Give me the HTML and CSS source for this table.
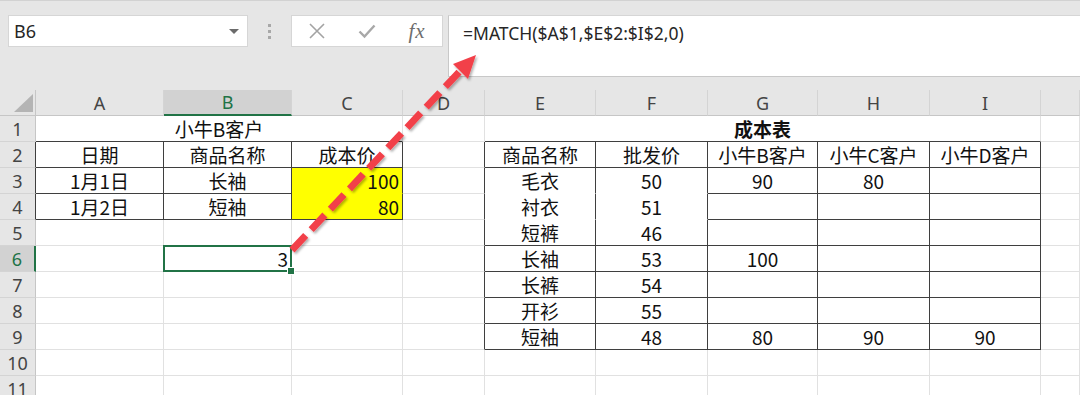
FILE: index.html
```html
<!DOCTYPE html>
<html lang="zh-CN">
<head>
<meta charset="utf-8">
<title>Excel MATCH</title>
<link rel="stylesheet" href="styles.css">
</head>
<body>
<div class="app">
  <div class="toolbar">
    <div class="namebox"><span>B6</span><span class="caret"></span></div>
    <div class="sep"><i></i><i></i><i></i></div>
    <div class="fxbox">
      <span class="ico"><svg width="18" height="18" viewBox="0 0 18 18"><path d="M2 2 L16 16 M16 2 L2 16" stroke="#a3a3a3" stroke-width="1.6" fill="none"/></svg></span>
      <span class="ico"><svg width="18" height="18" viewBox="0 0 18 18"><path d="M1.5 9.5 L6.5 14.5 L16.5 3.5" stroke="#a8a8a8" stroke-width="2.4" fill="none"/></svg></span>
      <span class="ico fx">fx</span>
    </div>
    <div class="formula">=MATCH($A$1,$E$2:$I$2,0)</div>
  </div>

  <div class="sheet">
    <!-- header row -->
    <div class="corner"><span class="tri"></span></div>
    <div class="ch">A</div><div class="ch sel">B</div><div class="ch">C</div><div class="ch">D</div>
    <div class="ch">E</div><div class="ch">F</div><div class="ch">G</div><div class="ch">H</div><div class="ch">I</div><div class="ch"></div>

    <!-- row 1 -->
    <div class="rh">1</div>
    <div class="c span3 bb">小牛B客户</div>
    <div class="c"></div>
    <div class="c span5 bb bold">成本表</div>
    <div class="c"></div>

    <!-- row 2 -->
    <div class="rh dk">2</div>
    <div class="c br bb">日期</div><div class="c br bb">商品名称</div><div class="c br bb">成本价</div>
    <div class="c br"></div>
    <div class="c br bb">商品名称</div><div class="c br bb">批发价</div><div class="c br bb">小牛B客户</div><div class="c br bb">小牛C客户</div><div class="c br bb">小牛D客户</div>
    <div class="c"></div>

    <!-- row 3 -->
    <div class="rh dk">3</div>
    <div class="c br bb">1月1日</div><div class="c br bb">长袖</div><div class="c br yl num">100</div>
    <div class="c br"></div>
    <div class="c br nb">毛衣</div><div class="c br nb">50</div><div class="c br bb">90</div><div class="c br bb">80</div><div class="c br bb"></div>
    <div class="c"></div>

    <!-- row 4 -->
    <div class="rh dk">4</div>
    <div class="c br bb">1月2日</div><div class="c br bb">短袖</div><div class="c br bb yl num">80</div>
    <div class="c br"></div>
    <div class="c br nb">衬衣</div><div class="c br nb">51</div><div class="c br bb"></div><div class="c br bb"></div><div class="c br bb"></div>
    <div class="c"></div>

    <!-- row 5 -->
    <div class="rh">5</div>
    <div class="c"></div><div class="c"></div><div class="c"></div>
    <div class="c br"></div>
    <div class="c br bb">短裤</div><div class="c br bb">46</div><div class="c br bb"></div><div class="c br bb"></div><div class="c br bb"></div>
    <div class="c"></div>

    <!-- row 6 -->
    <div class="rh rsel">6</div>
    <div class="c"></div><div class="c num active">3<span class="handle"></span></div><div class="c"></div>
    <div class="c br"></div>
    <div class="c br bb">长袖</div><div class="c br bb">53</div><div class="c br bb">100</div><div class="c br bb"></div><div class="c br bb"></div>
    <div class="c"></div>

    <!-- row 7 -->
    <div class="rh">7</div>
    <div class="c"></div><div class="c"></div><div class="c"></div>
    <div class="c br"></div>
    <div class="c br bb">长裤</div><div class="c br bb">54</div><div class="c br bb"></div><div class="c br bb"></div><div class="c br bb"></div>
    <div class="c"></div>

    <!-- row 8 -->
    <div class="rh">8</div>
    <div class="c"></div><div class="c"></div><div class="c"></div>
    <div class="c br"></div>
    <div class="c br bb">开衫</div><div class="c br bb">55</div><div class="c br bb"></div><div class="c br bb"></div><div class="c br bb"></div>
    <div class="c"></div>

    <!-- row 9 -->
    <div class="rh">9</div>
    <div class="c"></div><div class="c"></div><div class="c"></div>
    <div class="c br"></div>
    <div class="c br bb">短袖</div><div class="c br bb">48</div><div class="c br bb">80</div><div class="c br bb">90</div><div class="c br bb">90</div>
    <div class="c"></div>

    <!-- row 10 -->
    <div class="rh">10</div>
    <div class="c"></div><div class="c"></div><div class="c"></div><div class="c"></div><div class="c"></div>
    <div class="c"></div><div class="c"></div><div class="c"></div><div class="c"></div><div class="c"></div>

    <!-- row 11 -->
    <div class="rh">11</div>
    <div class="c"></div><div class="c"></div><div class="c"></div><div class="c"></div><div class="c"></div>
    <div class="c"></div><div class="c"></div><div class="c"></div><div class="c"></div><div class="c"></div>
  </div>

  <svg class="arrow" width="1080" height="395" viewBox="0 0 1080 395">
    <defs>
      <filter id="sh" x="-20%" y="-20%" width="140%" height="140%">
        <feDropShadow dx="1.5" dy="2" stdDeviation="1.2" flood-color="#000" flood-opacity="0.3"/>
      </filter>
    </defs>
    <g filter="url(#sh)">
      <line x1="292" y1="250" x2="462" y2="69" stroke="#f2404a" stroke-width="7" stroke-dasharray="20 8"/>
      <polygon points="476,55 453,64 468,79" fill="#f2404a"/>
    </g>
  </svg>
</div>
</body>
</html>
```

FILE: styles.css
```css
html, body {
  margin: 0;
  padding: 0;
  background: #ffffff;
}

.app {
  position: relative;
  width: 1080px;
  height: 395px;
  overflow: hidden;
  font-family: "Noto Sans CJK SC", "Noto Sans", sans-serif;
}

/* ---------- toolbar ---------- */
.toolbar {
  height: 90px;
  box-sizing: border-box;
  background: #e6e6e6;
  border-top: 1px solid #d2d2d2;
  display: flex;
  align-items: flex-start;
  padding: 14px 0 0 8px;
}

.namebox {
  width: 240px;
  height: 32px;
  box-sizing: border-box;
  background: #fff;
  border: 1px solid #d6d6d6;
  display: flex;
  align-items: center;
  justify-content: space-between;
  padding: 0 8px 0 5px;
  font-family: "Noto Sans", sans-serif;
  font-size: 18px;
  color: #262626;
}

.caret {
  width: 0;
  height: 0;
  border-left: 5px solid transparent;
  border-right: 5px solid transparent;
  border-top: 5px solid #6b6b6b;
}

.sep {
  width: 43px;
  height: 32px;
  display: flex;
  flex-direction: column;
  align-items: center;
  justify-content: center;
  gap: 3px;
}

.sep i {
  display: block;
  width: 3px;
  height: 3px;
  background: #a8a8a8;
}

.fxbox {
  width: 152px;
  height: 32px;
  box-sizing: border-box;
  background: #fff;
  border: 1px solid #d6d6d6;
  display: flex;
  align-items: center;
  justify-content: space-around;
}

.ico {
  width: 20px;
  display: flex;
  align-items: center;
  justify-content: center;
}

.fx {
  font-family: "Liberation Serif", serif;
  font-style: italic;
  font-size: 21px;
  color: #6e6e6e;
  line-height: 1;
  letter-spacing: 1px;
}

.formula {
  flex: 1;
  margin-left: 5px;
  height: 62px;
  box-sizing: border-box;
  background: #fff;
  border-top: 1px solid #d6d6d6;
  border-left: 1px solid #c8c8c8;
  border-bottom: 1px solid #c8c8c8;
  padding: 5px 0 0 14px;
  font-family: "Noto Sans", sans-serif;
  font-size: 17.5px;
  line-height: 24px;
  color: #262626;
}

/* ---------- sheet ---------- */
.sheet {
  display: grid;
  grid-template-columns: 36px 128px 128px 111px 82px 111px 112px 110px 112px 111px 1fr;
  grid-auto-rows: 26px;
}

.corner, .ch, .rh {
  background: #e6e6e6;
  box-sizing: border-box;
  color: #444;
  font-family: "Noto Sans", sans-serif;
  font-size: 18px;
  display: flex;
  align-items: center;
  justify-content: center;
}

.corner {
  position: relative;
  border-right: 1px solid #c6c6c6;
  border-bottom: 1px solid #c6c6c6;
}

.tri {
  position: absolute;
  right: 2px;
  bottom: 3px;
  width: 0;
  height: 0;
  border-left: 19px solid transparent;
  border-bottom: 18px solid #b4b4b4;
}

.ch {
  border-right: 1px solid #d4d4d4;
  border-bottom: 1px solid #c6c6c6;
}

.ch.sel {
  background: #d2d2d2;
  color: #217346;
  border-bottom: 2px solid #217346;
}

.rh {
  border-right: 1px solid #c6c6c6;
  border-bottom: 1px solid #d4d4d4;
}

.rh.dk {
  border-right-color: #3f3f3f;
}

.rh.rsel {
  background: #d2d2d2;
  color: #217346;
  border-right: 2px solid #217346;
}

.c {
  box-sizing: border-box;
  border-right: 1px solid #e1e1e1;
  border-bottom: 1px solid #e1e1e1;
  font-size: 19px;
  line-height: 25px;
  color: #111;
  text-align: center;
  white-space: nowrap;
  overflow: visible;
}

.span3 { grid-column: span 3; }
.span5 { grid-column: span 5; }
.bold { font-weight: 700; }

.br { border-right-color: #3f3f3f; }
.bb { border-bottom-color: #3f3f3f; }
.nb { border-bottom-color: #ffffff; }

.yl {
  background: #ffff00;
  border-bottom-color: #ffff00;
}
.yl.bb { border-bottom-color: #3f3f3f; }

.num {
  text-align: right;
  padding-right: 3px;
}

.active {
  position: relative;
}

.active::after {
  content: "";
  position: absolute;
  left: -1px;
  top: -1px;
  right: -1px;
  bottom: -1px;
  border: 2px solid #217346;
}

.handle {
  position: absolute;
  right: -4px;
  bottom: -4px;
  width: 6px;
  height: 6px;
  background: #217346;
  border: 1px solid #fff;
  z-index: 2;
}

/* ---------- overlay arrow ---------- */
.arrow {
  position: absolute;
  left: 0;
  top: 0;
  pointer-events: none;
}
```
